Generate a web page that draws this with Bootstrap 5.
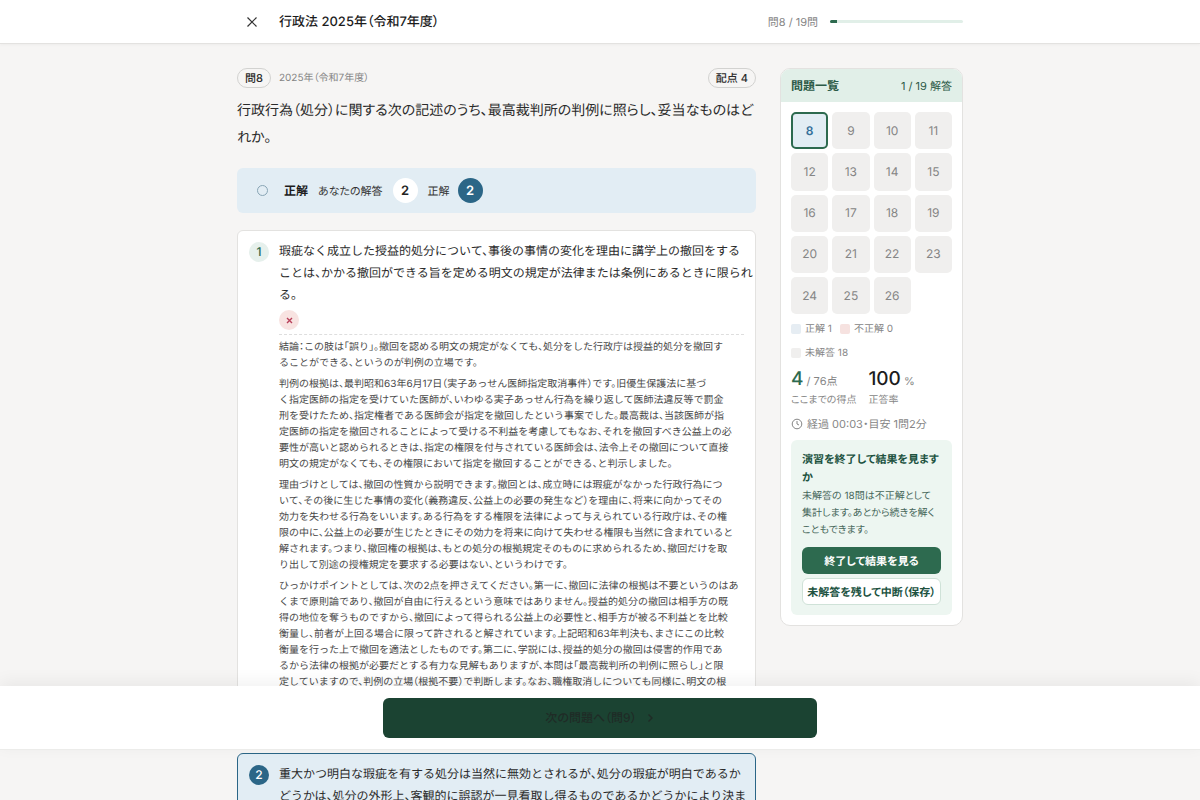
<!DOCTYPE html>
<html lang="ja">
<head>
<meta charset="utf-8">
<meta name="viewport" content="width=device-width, initial-scale=1">
<title>行政法 2025年（令和7年度）</title>
<link href="https://cdn.jsdelivr.net/npm/bootstrap@5.3.0/dist/css/bootstrap.min.css" rel="stylesheet">
<style>
:root{--green:#2d6a4f;--deep:#1b4332;--blue:#2b6687;--sky:#e2edf4;--paper:#f6f5f4;--line:#e3e2e0;--muted:#858585}
body{background:var(--paper);color:#2b2b2b;font-family:Inter,"Noto Sans CJK JP",sans-serif;font-size:11px;line-height:16px;font-feature-settings:"palt","kern";text-rendering:geometricPrecision}
button{font-feature-settings:inherit;text-rendering:inherit}
.frame{max-width:726px}
.topbar{height:44px;border-bottom:1px solid var(--line);box-shadow:0 1px 3px rgba(0,0,0,.04)}
.topbar h1{font-size:13px;line-height:20px;font-weight:500;color:#1c1c1c}
.close-btn{width:30px;height:30px;color:#333;place-items:center}
.quiz-progress{width:133px;height:3px;background:#e1efe8;border-radius:2px}
.quiz-progress .progress-bar{background:var(--green)}
.soft{color:var(--muted)}
.main-col{min-width:0}
.tag{border:1px solid #d2d2d0;border-radius:10px;height:20px;line-height:18px;padding:0 7px;font-weight:500}
.question{font-size:14px;line-height:27px;white-space:nowrap;margin:9px 0 17px}
.side{width:183px}
.verdict{background:var(--sky);border-radius:6px;height:45px;padding:0 20px;color:#333}
.verdict b{font-size:12px;color:#1c1c1c}
.verdict-label{margin:0 10px}
.ring{width:11px;height:11px;border:1px solid #88a5b5;border-radius:50%}
.dot{width:25px;height:25px;border-radius:50%;background:#fff;font-size:13px;font-weight:600;display:grid;place-items:center;color:#222}
.dot.hit{background:var(--blue);color:#fff}
.choice{background:#fff;border:1px solid var(--line);border-radius:6px;padding:9px 11px;gap:10px}
.choice.chosen{background:var(--sky);border-color:var(--blue)}
.num{width:20px;height:20px;border-radius:50%;background:#e6f0ec;color:var(--green);display:grid;place-items:center;font-size:12px;font-weight:500;margin-top:2px}
.chosen .num{background:var(--blue);color:#fff}
.stem{font-size:12px;line-height:22px;white-space:nowrap;font-feature-settings:"halt"}
.wrong{width:20px;height:20px;border-radius:50%;background:#f8e3e1;display:grid;place-items:center}
.explain{border-top:1px dashed #dedede;color:#484848;white-space:nowrap;padding-top:4px;font-size:10px;font-feature-settings:"halt"}
.explain p{margin:0 0 5px}
.first{height:515px;margin-top:17px}
.panel{background:#fff;border:1px solid var(--line);border-radius:10px;overflow:hidden}
.panel-top{background:#e1efe8;color:#2c5a47;padding:0 10px;height:33px}
.panel-top h2{font-size:12px;line-height:18px;font-weight:700}
.panel-main{padding:10px}
.grid-nums{display:grid;grid-template-columns:repeat(4,1fr);gap:4px}
.grid-nums button{aspect-ratio:1;border:0;border-radius:5px;background:#f0efee;color:#858585;font-size:12px;padding:0}
.grid-nums button.now{background:var(--sky);color:#35709a;border:2px solid var(--green);font-weight:600}
.legend-list{font-size:10px;line-height:14px;column-gap:8px;row-gap:10px}
.sw{width:10px;height:10px;border-radius:2px;background:#f0efee}
.sw.ok{background:#e6edf3}.sw.ng{background:#f6e2e0}
.score{font-size:19px;line-height:22px;font-weight:500;color:#1c1c1c}
.label-sm{font-size:10px}
.tiny{font-size:11px;font-weight:400}
.finish{background:#edf6f1;border-radius:6px;padding:10px 11px;color:#46665a}
.finish h3{font-size:11px;line-height:18px;font-weight:700;color:#20523f;white-space:nowrap}
.finish p{font-size:10px;line-height:17px;white-space:nowrap;margin:2px 0 8px}
.act{height:27px;border-radius:6px;font-size:11px;font-weight:600;padding:0;line-height:16px;white-space:nowrap}
.act,.act:hover{background:var(--green);color:#fff}
.act.alt,.act.alt:hover{background:#fff;border:1px solid #cfe2d8;color:#20523f}
.nextbar{position:fixed;left:0;right:0;bottom:50px;height:64px;background:#fff;box-shadow:0 -4px 16px rgba(0,0,0,.06);border-bottom:1px solid #ececea}
.next,.next:hover{width:434px;height:40px;border-radius:6px;background:var(--deep);color:#1f2b26;font-size:12px;font-weight:500}
</style>
</head>
<body>
<div class="vh-100 overflow-hidden">
<header class="topbar bg-white d-flex align-items-center px-3">
  <div class="frame container-fluid px-0 d-flex align-items-center">
    <button class="close-btn btn p-0 border-0 d-grid" aria-label="閉じる"><svg width="12" height="12" viewBox="0 0 12 12" fill="none" stroke="currentColor" stroke-width="1.2"><path d="M1.5 1.5l9 9M10.5 1.5l-9 9"/></svg></button>
    <h1 class="m-0 ms-2 ps-1">行政法 2025年（令和7年度）</h1>
    <span class="soft ms-auto me-2 pe-1">問8 / 19問</span>
    <div class="progress quiz-progress"><div class="progress-bar" role="progressbar" aria-label="進捗" style="width:5.3%"></div></div>
  </div>
</header>
<div class="px-3">
<div class="frame container-fluid px-0 pt-4 d-flex align-items-start gap-4">
  <main class="main-col flex-grow-1">
    <div class="d-flex align-items-center gap-2">
      <span class="tag">問8</span><span class="soft label-sm">2025年（令和7年度）</span><span class="tag ms-auto">配点 4</span>
    </div>
    <p class="question">行政行為（処分）に関する次の記述のうち、最高裁判所の判例に照らし、妥当なものはど<br>れか。</p>
    <div class="verdict d-flex align-items-center">
      <span class="ring me-3"></span><b>正解</b><span class="verdict-label">あなたの解答</span><span class="dot">2</span><span class="verdict-label me-2">正解</span><span class="dot hit">2</span>
    </div>
    <article class="choice first d-flex">
      <span class="num flex-shrink-0">1</span>
      <div class="main-col flex-grow-1">
        <p class="stem mb-0">瑕疵なく成立した授益的処分について、事後の事情の変化を理由に講学上の撤回をする<br>ことは、かかる撤回ができる旨を定める明文の規定が法律または条例にあるときに限られ<br>る。</p>
        <span class="wrong mt-1 mb-1"><svg width="7" height="7" viewBox="0 0 7 7" stroke="#b8405a" stroke-width="1.4"><path d="M1 1l5 5M6 1L1 6"/></svg></span>
        <div class="explain">
          <p>結論：この肢は「誤り」。撤回を認める明文の規定がなくても、処分をした行政庁は授益的処分を撤回す<br>ることができる、というのが判例の立場です。</p>
          <p>判例の根拠は、最判昭和63年6月17日（実子あっせん医師指定取消事件）です。旧優生保護法に基づ<br>く指定医師の指定を受けていた医師が、いわゆる実子あっせん行為を繰り返して医師法違反等で罰金<br>刑を受けたため、指定権者である医師会が指定を撤回したという事案でした。最高裁は、当該医師が指<br>定医師の指定を撤回されることによって受ける不利益を考慮してもなお、それを撤回すべき公益上の必<br>要性が高いと認められるときは、指定の権限を付与されている医師会は、法令上その撤回について直接<br>明文の規定がなくても、その権限において指定を撤回することができる、と判示しました。</p>
          <p>理由づけとしては、撤回の性質から説明できます。撤回とは、成立時には瑕疵がなかった行政行為につ<br>いて、その後に生じた事情の変化（義務違反、公益上の必要の発生など）を理由に、将来に向かってその<br>効力を失わせる行為をいいます。ある行為をする権限を法律によって与えられている行政庁は、その権<br>限の中に、公益上の必要が生じたときにその効力を将来に向けて失わせる権限も当然に含まれていると<br>解されます。つまり、撤回権の根拠は、もとの処分の根拠規定そのものに求められるため、撤回だけを取<br>り出して別途の授権規定を要求する必要はない、というわけです。</p>
          <p>ひっかけポイントとしては、次の2点を押さえてください。第一に、撤回に法律の根拠は不要というのはあ<br>くまで原則論であり、撤回が自由に行えるという意味ではありません。授益的処分の撤回は相手方の既<br>得の地位を奪うものですから、撤回によって得られる公益上の必要性と、相手方が被る不利益とを比較<br>衡量し、前者が上回る場合に限って許されると解されています。上記昭和63年判決も、まさにこの比較<br>衡量を行った上で撤回を適法としたものです。第二に、学説には、授益的処分の撤回は侵害的作用であ<br>るから法律の根拠が必要だとする有力な見解もありますが、本問は「最高裁判所の判例に照らし」と限<br>定していますので、判例の立場（根拠不要）で判断します。なお、職権取消しについても同様に、明文の根</p>
        </div>
      </div>
    </article>
    <article class="choice chosen d-flex mt-2">
      <span class="num flex-shrink-0">2</span>
      <p class="stem mb-0">重大かつ明白な瑕疵を有する処分は当然に無効とされるが、処分の瑕疵が明白であるか<br>どうかは、処分の外形上、客観的に誤認が一見看取し得るものであるかどうかにより決ま</p>
    </article>
  </main>
  <aside class="side flex-shrink-0 panel">
    <div class="panel-top d-flex align-items-center justify-content-between"><h2 class="m-0">問題一覧</h2><span>1 / 19 解答</span></div>
    <div class="panel-main">
      <div class="grid-nums">
        <button class="now">8</button><button>9</button><button>10</button><button>11</button><button>12</button><button>13</button><button>14</button><button>15</button><button>16</button><button>17</button><button>18</button><button>19</button><button>20</button><button>21</button><button>22</button><button>23</button><button>24</button><button>25</button><button>26</button>
      </div>
      <div class="legend-list soft d-flex flex-wrap mt-2">
        <span class="d-flex align-items-center gap-1"><i class="sw ok"></i>正解 1</span><span class="d-flex align-items-center gap-1"><i class="sw ng"></i>不正解 0</span><span class="d-flex align-items-center gap-1"><i class="sw"></i>未解答 18</span>
      </div>
      <div class="d-flex gap-2 mt-2 soft label-sm">
        <div class="me-1"><div class="score"><span style="color:var(--green)">4</span><span class="tiny soft"> / 76点</span></div>ここまでの得点</div>
        <div><div class="score">100<span class="tiny soft"> %</span></div>正答率</div>
      </div>
      <div class="soft d-flex align-items-center gap-1 mt-2"><svg width="12" height="12" viewBox="0 0 12 12" fill="none" stroke="currentColor"><circle cx="6" cy="6" r="4.8"/><path d="M6 3v3l2 1"/></svg>経過 00:03・目安 1問2分</div>
      <section class="finish mt-2">
        <h3 class="m-0">演習を終了して結果を見ます<br>か</h3>
        <p>未解答の 18問は不正解として<br>集計します。あとから続きを解く<br>こともできます。</p>
        <button class="btn act w-100 d-block border-0">終了して結果を見る</button>
        <button class="btn act alt w-100 d-block mt-1">未解答を残して中断（保存）</button>
      </section>
    </div>
  </aside>
</div>
</div>
</div>
<div class="nextbar d-flex align-items-center justify-content-center"><button class="btn next border-0 p-0">次の問題へ（問9）<svg class="ms-2" width="10" height="10" viewBox="0 0 10 10" fill="none" stroke="currentColor" stroke-width="1.4"><path d="M3.5 1.5L7 5 3.5 8.5"/></svg></button></div>
<script src="https://cdn.jsdelivr.net/npm/bootstrap@5.3.0/dist/js/bootstrap.bundle.min.js"></script>
</body>
</html>
